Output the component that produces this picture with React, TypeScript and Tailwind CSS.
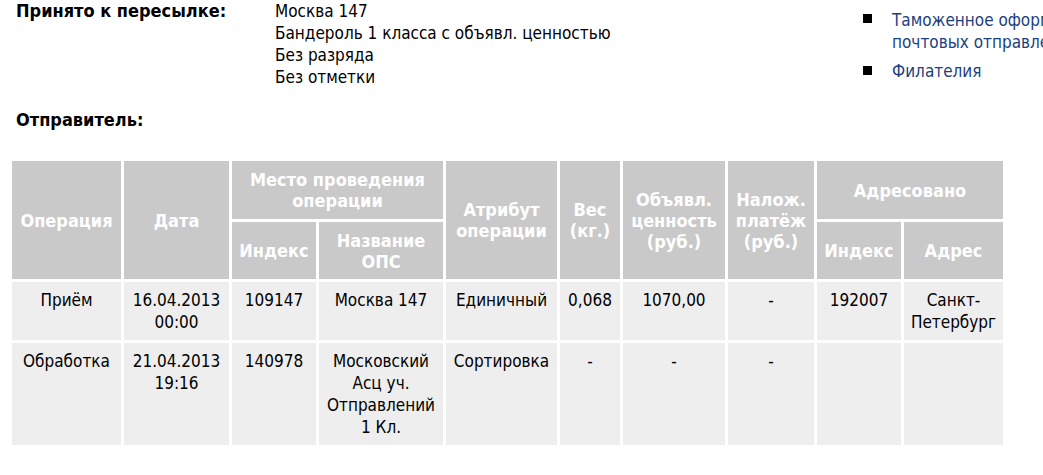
const headCell = "bg-[#c9c9c9] text-white font-bold text-[18px] text-center align-middle px-1 leading-[21px]";
const dataCell = "bg-[#eeeeee] text-black text-center align-top px-1 pt-[7px] pb-[7px]";

const rows = [
  ["Приём", "16.04.2013 00:00", "109147", "Москва 147", "Единичный", "0,068", "1070,00", "-", "192007", "Санкт-Петербург"],
  ["Обработка", "21.04.2013 19:16", "140978", "Московский Асц уч. Отправлений 1 Кл.", "Сортировка", "-", "-", "-", "", ""],
];

export default function App() {
  return (
    <div className="w-[1043px] h-[475px] overflow-hidden bg-white text-black text-[17px] leading-[22px] font-stretch-condensed [font-family:'DejaVu_Sans_Condensed','DejaVu_Sans',sans-serif]">
      <div className="flex">
        <div className="w-[863px] shrink-0 pl-4 grid grid-cols-[259px_1fr]">
          <div className="font-bold text-[18px]">Принято к пересылке:</div>
          <div>
            <div>Москва 147</div>
            <div>Бандероль 1 класса с объявл. ценностью</div>
            <div>Без разряда</div>
            <div>Без отметки</div>
          </div>
        </div>
        <ul className="w-[260px] shrink-0 pt-[9px] flex flex-col gap-[7px]">
          <li className="flex gap-5">
            <span className="mt-[5px] w-[9px] h-[9px] bg-black shrink-0" />
            <a className="text-[#1b4080] w-[220px]">Таможенное оформление почтовых отправлений</a>
          </li>
          <li className="flex gap-5">
            <span className="mt-[6px] w-[9px] h-[9px] bg-black shrink-0" />
            <a className="text-[#1b4080]">Филателия</a>
          </li>
        </ul>
      </div>

      <div className="pl-4 mt-[21px] font-bold text-[18px]">Отправитель:</div>

      <table className="ml-[9px] mt-[27px] w-[997px] table-fixed border-separate border-spacing-[3px]">
        <colgroup>
          <col className="w-[109px]" />
          <col className="w-[105px]" />
          <col className="w-[84px]" />
          <col className="w-[124px]" />
          <col className="w-[111px]" />
          <col className="w-[60px]" />
          <col className="w-[102px]" />
          <col className="w-[86px]" />
          <col className="w-[84px]" />
          <col className="w-[99px]" />
        </colgroup>
        <thead>
          <tr className="h-[58px]">
            <th rowSpan={2} className={headCell}>Операция</th>
            <th rowSpan={2} className={headCell}>Дата</th>
            <th colSpan={2} className={headCell}>Место проведения операции</th>
            <th rowSpan={2} className={headCell}>Атрибут операции</th>
            <th rowSpan={2} className={headCell}>Вес (кг.)</th>
            <th rowSpan={2} className={headCell}>Объявл. ценность (руб.)</th>
            <th rowSpan={2} className={headCell}>Налож. платёж (руб.)</th>
            <th colSpan={2} className={headCell}>Адресовано</th>
          </tr>
          <tr className="h-[57px]">
            <th className={headCell}>Индекс</th>
            <th className={headCell}>Название ОПС</th>
            <th className={headCell}>Индекс</th>
            <th className={headCell}>Адрес</th>
          </tr>
        </thead>
        <tbody>
          {rows.map((r, i) => (
            <tr key={i}>
              {r.map((c, j) => (
                <td key={j} className={dataCell}>{c}</td>
              ))}
            </tr>
          ))}
        </tbody>
      </table>
    </div>
  );
}
